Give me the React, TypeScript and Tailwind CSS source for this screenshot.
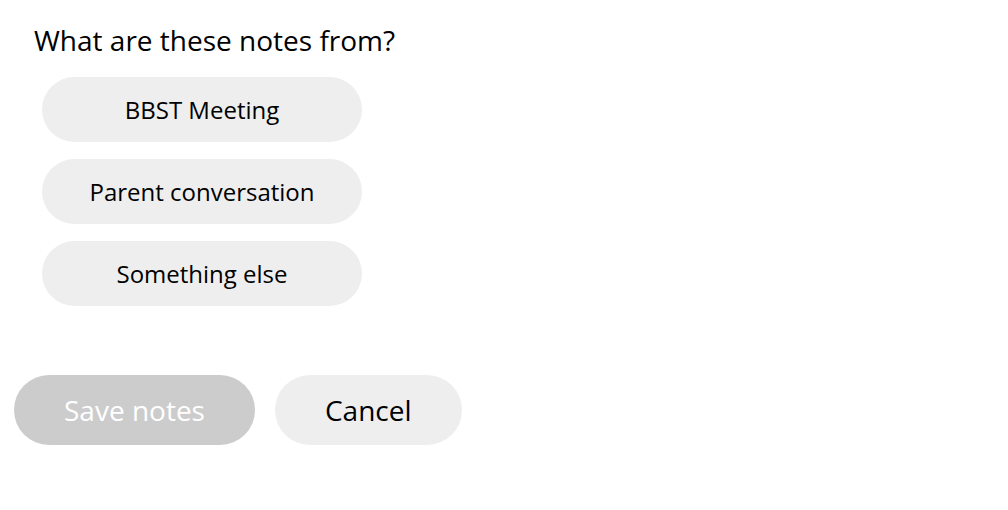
export default function App() {
  const options = ['BBST Meeting', 'Parent conversation', 'Something else'];

  return (
    <div className="w-[1008px] h-[510px] bg-white font-['Open_Sans',sans-serif] text-black">
      <div className="pt-[20px] pl-[34px] text-[28px] leading-[40px]">What are these notes from?</div>

      <div className="flex flex-col gap-[17px] pl-[42px] mt-[17px]">
        {options.map((opt) => (
          <button
            key={opt}
            className="w-[320px] h-[65px] rounded-full bg-[#eeeeee] text-[24px] flex items-center justify-center pt-px"
          >
            {opt}
          </button>
        ))}
      </div>

      <div className="flex gap-[20px] pl-[14px] mt-[69px]">
        <button
          disabled
          className="h-[70px] px-[50px] rounded-full bg-[#cccccc] text-white text-[28px] flex items-center"
        >
          Save notes
        </button>
        <button className="h-[70px] px-[50px] rounded-full bg-[#eeeeee] text-[28px] flex items-center">
          Cancel
        </button>
      </div>
    </div>
  );
}
